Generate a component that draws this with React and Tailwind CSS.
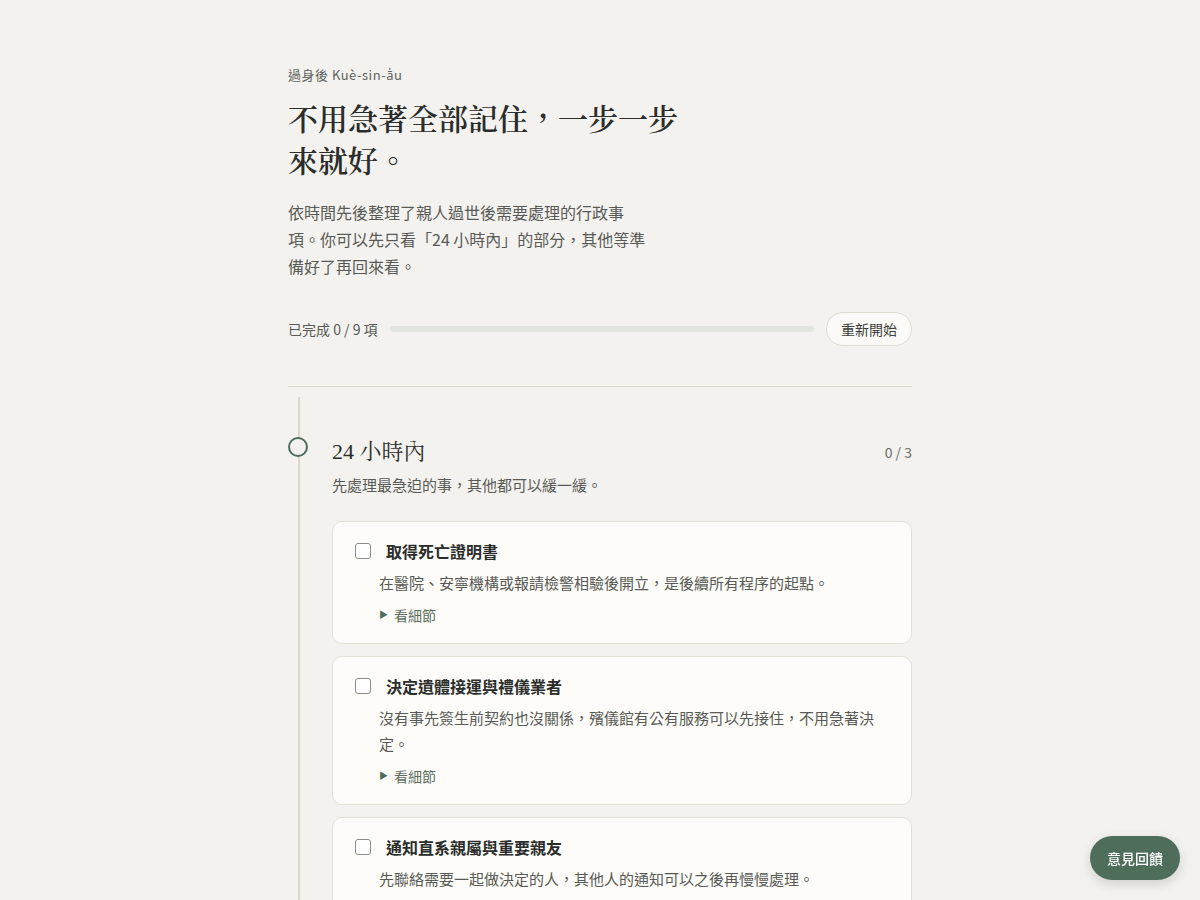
import { useState } from "react";

const sans = { fontFamily: '"Noto Sans CJK TC", "Noto Sans", sans-serif' };
const serif = { fontFamily: '"Liberation Serif", "Noto Serif CJK TC", "Noto Sans CJK TC", serif' };

const sections = [
  {
    title: "24 小時內",
    note: "先處理最急迫的事，其他都可以緩一緩。",
    items: [
      {
        title: "取得死亡證明書",
        desc: "在醫院、安寧機構或報請檢警相驗後開立，是後續所有程序的起點。",
      },
      {
        title: "決定遺體接運與禮儀業者",
        desc: "沒有事先簽生前契約也沒關係，殯儀館有公有服務可以先接住，不用急著決定。",
      },
      {
        title: "通知直系親屬與重要親友",
        desc: "先聯絡需要一起做決定的人，其他人的通知可以之後再慢慢處理。",
      },
    ],
  },
  {
    title: "30 天內",
    note: "這些事有期限，但不必在同一天完成。",
    items: [
      {
        title: "辦理死亡登記",
        desc: "到戶政事務所辦理，同時可以申請全戶戶籍謄本，之後很多地方會用到。",
      },
      {
        title: "申請喪葬補助與保險給付",
        desc: "勞保、國保或農保都有相關給付，可以一次詢問清楚。",
      },
      {
        title: "確認遺產與債務狀況",
        desc: "可向國稅局申請財產、所得資料，也能查詢金融機構往來。",
      },
    ],
  },
  {
    title: "半年內",
    note: "準備好了再回來看。",
    items: [
      {
        title: "申報遺產稅",
        desc: "過世後六個月內申報，若需要可以申請延期。",
      },
      {
        title: "辦理繼承登記",
        desc: "不動產需在六個月內辦理，逾期會有罰鍰。",
      },
      {
        title: "處理帳戶與各項契約",
        desc: "銀行帳戶、電信、水電與訂閱服務，可以慢慢一項一項結束。",
      },
    ],
  },
];

function TaskCard({ item, checked, onToggle }) {
  return (
    <div className="rounded-[10px] border border-[#e4e0d6] bg-[#fdfcf8] px-[22px] pt-[17px] pb-[18px]">
      <label className="flex items-center gap-[15px] cursor-pointer">
        <span
          onClick={onToggle}
          className={
            checked
              ? "h-[16px] w-[16px] shrink-0 rounded-[3px] border-[1.5px] border-[#4e6e5b] bg-[#4e6e5b]"
              : "h-[16px] w-[16px] shrink-0 rounded-[3px] border-[1.5px] border-[#8d8d89] bg-white"
          }
        />
        <span className="text-[16px] leading-[24px] font-bold text-[#2a2d2b]">
          {item.title}
        </span>
      </label>
      <p className="mt-[7px] pl-[24px] text-[15px] leading-[26px] text-[#575a56]">
        {item.desc}
      </p>
      <div className="mt-[9px] pl-[24px] flex items-center gap-[6px] text-[14px] leading-[20px] text-[#5b6e61]">
        <span className="text-[9px] text-[#4e6e5b]">▶</span>
        <span>看細節</span>
      </div>
    </div>
  );
}

export default function App() {
  const [done, setDone] = useState({});
  const total = sections.reduce((n, s) => n + s.items.length, 0);
  const count = Object.values(done).filter(Boolean).length;

  return (
    <div className="min-h-screen bg-[#f4f2ee] text-[#2a2d2b]" style={sans}>
      <div className="mx-auto w-[624px] pt-[65px] pb-[120px]">
        <div className="text-[13px] leading-[20px] tracking-[0.04em] text-[#5f625e]">
          過身後 Kuè-sin-ā̍u
        </div>
        <h1
          className="mt-[14px] max-w-[400px] text-[30px] leading-[42px] font-semibold text-[#2a2d2b]"
          style={serif}
        >
          不用急著全部記住，一步一步來就好。
        </h1>
        <p className="mt-[16px] max-w-[360px] text-[16px] leading-[27px] text-[#575a56]">
          依時間先後整理了親人過世後需要處理的行政事項。你可以先只看「24 小時內」的部分，其他等準備好了再回來看。
        </p>

        <div className="mt-[32px] flex items-center gap-[12px]">
          <span className="text-[14px] text-[#575a56]">
            已完成 {count} / {total} 項
          </span>
          <div className="h-[6px] flex-1 rounded-full bg-[#e2e5dd]">
            <div
              className="h-full rounded-full bg-[#4e6e5b]"
              style={{ width: `${(count / total) * 100}%` }}
            />
          </div>
          <button
            onClick={() => setDone({})}
            className="h-[34px] rounded-full border border-[#e0dcd2] bg-[#fbfaf6] px-[14px] text-[14px] text-[#3d403c]"
          >
            重新開始
          </button>
        </div>

        <div className="mt-[40px] border-t border-[#ddd8cc]" />

        {sections.map((s, si) => {
          const sectionDone = s.items.filter((_, i) => done[`${si}-${i}`]).length;
          return (
            <section key={si} className="relative pl-[44px] pt-[50px]">
              <div className="absolute left-[10px] top-[10px] bottom-0 w-[2px] bg-[#dcd6ca]" />
              <div className="absolute left-0 top-[50px] h-[20px] w-[20px] rounded-full border-2 border-[#4e6e5b] bg-[#f4f2ee]" />
              <div className="flex items-center justify-between">
                <h2 className="text-[22px] leading-[30px] text-[#2a2d2b]" style={serif}>
                  {s.title}
                </h2>
                <span className="text-[14px] text-[#6a6d69]">
                  {sectionDone} / {s.items.length}
                </span>
              </div>
              <p className="mt-[6px] text-[15px] leading-[24px] text-[#575a56]">{s.note}</p>
              <div className="mt-[24px] flex flex-col gap-[12px]">
                {s.items.map((item, i) => (
                  <TaskCard
                    key={i}
                    item={item}
                    checked={!!done[`${si}-${i}`]}
                    onToggle={() =>
                      setDone((d) => ({ ...d, [`${si}-${i}`]: !d[`${si}-${i}`] }))
                    }
                  />
                ))}
              </div>
            </section>
          );
        })}
      </div>

      <button className="fixed right-[20px] bottom-[20px] h-[44px] rounded-full bg-[#4e6e5b] px-[17px] text-[14px] font-medium text-white shadow-[0_4px_12px_rgba(0,0,0,0.15)]">
        意見回饋
      </button>
    </div>
  );
}
